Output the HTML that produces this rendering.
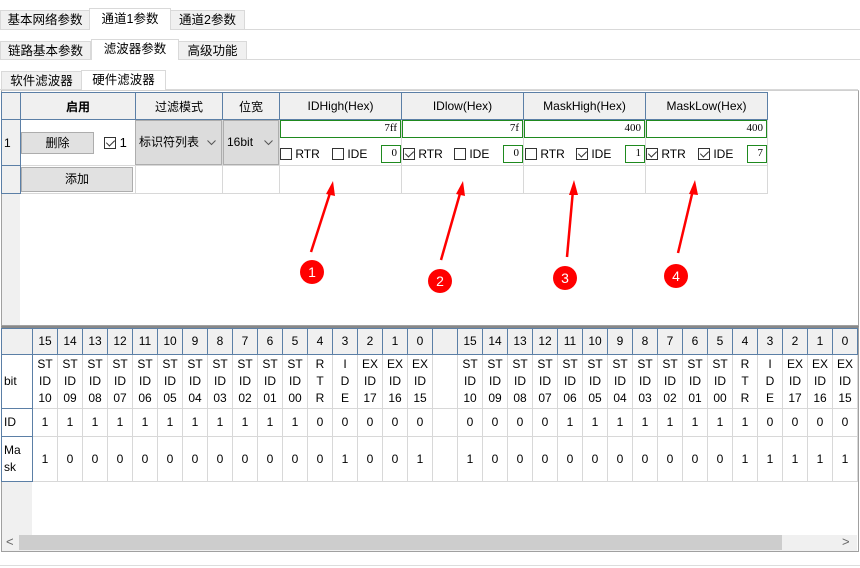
<!DOCTYPE html>
<html><head><meta charset="utf-8"><style>
*{box-sizing:border-box;margin:0;padding:0}
body{width:860px;height:568px;background:#fff;font-family:"Liberation Sans","Noto Sans CJK SC",sans-serif;font-size:12px;color:#000;position:relative;overflow:hidden}
.a{position:absolute}
.tab{position:absolute;background:#f0f0f0;border:1px solid #d9d9d9;border-bottom:none;text-align:center;font-size:12.5px;line-height:18px}
.tab.s{background:#fff}
.hl{position:absolute;left:0;right:0;height:1px;background:#d9d9d9}
table{border-collapse:collapse;table-layout:fixed;position:absolute}
td{border:1px solid #d8d8d8;text-align:center;padding:0;overflow:hidden;white-space:nowrap}
.h td{background:#f0f0f0;border-color:#5b7fa6}
.rh{background:#f0f0f0;border-color:#5b7fa6 !important}
.btn{position:absolute;background:#e1e1e1;border:1px solid #adadad;text-align:center;line-height:20px}
.cb{display:inline-block;width:12px;height:12px;border:1px solid #333;vertical-align:-2px;position:relative;background:#fff}
.cb.c::after{content:"";position:absolute;left:3px;top:0px;width:4px;height:7px;border:solid #333;border-width:0 1px 1px 0;transform:rotate(45deg)}
.gi{position:absolute;border:1px solid #1f8a1f;background:#fff;text-align:right;font-family:"Liberation Serif","Noto Serif CJK SC",serif;font-size:11px;line-height:15px;padding-right:3px}
.cell{position:absolute;font-size:12px;line-height:14px}
.g2 td{font-size:12px;line-height:17px}
.chev{position:absolute;right:5px;top:19px}
</style></head><body>
<div class="hl" style="top:29px"></div>
<div class="tab" style="left:0;top:10px;width:90px;height:19px">基本网络参数</div>
<div class="tab s" style="left:89px;top:8px;width:82px;height:22px;line-height:20px">通道1参数</div>
<div class="tab" style="left:170px;top:10px;width:75px;height:19px">通道2参数</div>
<div class="hl" style="top:59px"></div>
<div class="tab" style="left:0;top:41px;width:91px;height:18px">链路基本参数</div>
<div class="tab s" style="left:91px;top:39px;width:88px;height:21px">滤波器参数</div>
<div class="tab" style="left:178px;top:41px;width:69px;height:18px">高级功能</div>
<div class="hl" style="top:89px;left:0;right:2px"></div>
<div class="tab" style="left:1px;top:71px;width:81px;height:18px">软件滤波器</div>
<div class="tab s" style="left:81px;top:70px;width:85px;height:21px">硬件滤波器</div>

<div class="a" style="left:1px;top:90px;width:858px;height:236px;border:1px solid #a0a0a0;border-top-color:#d0d0d0"></div>
<div class="a" style="left:2px;top:193px;width:18px;height:132px;background:#f0f0f0"></div>
<table style="left:1px;top:92px">
<colgroup><col style="width:19px"><col style="width:115px"><col style="width:87px"><col style="width:57px"><col style="width:122px"><col style="width:122px"><col style="width:122px"><col style="width:122px"></colgroup>
<tr class="h" style="height:27px"><td></td><td style="font-weight:bold">启用</td><td>过滤模式</td><td>位宽</td><td>IDHigh(Hex)</td><td>IDlow(Hex)</td><td>MaskHigh(Hex)</td><td>MaskLow(Hex)</td></tr>
<tr style="height:46px"><td class="rh" style="text-align:left;padding-left:2px">1</td><td></td><td></td><td></td><td></td><td></td><td></td><td></td></tr>
<tr style="height:28px"><td class="rh"></td><td></td><td></td><td></td><td></td><td></td><td></td><td></td></tr>
</table>
<div class="btn" style="left:21px;top:132px;width:73px;height:22px">删除</div>
<div class="a" style="left:104px;top:135px;font-size:13px"><span class="cb c"></span> 1</div>
<div class="a" style="left:135px;top:120px;width:87px;height:45px;background:#dcdcdc;border:1px solid #adadad;line-height:43px;padding-left:3px">标识符列表<svg class="chev" width="9" height="6"><path d="M0.5 0.5 L4.5 4.5 L8.5 0.5" fill="none" stroke="#555"/></svg></div>
<div class="a" style="left:223px;top:120px;width:56px;height:45px;background:#dcdcdc;border:1px solid #adadad;line-height:43px;padding-left:3px">16bit<svg class="chev" width="9" height="6"><path d="M0.5 0.5 L4.5 4.5 L8.5 0.5" fill="none" stroke="#555"/></svg></div>
<div class="btn" style="left:21px;top:167px;width:112px;height:25px;line-height:23px">添加</div>

<div class="gi" style="left:280px;top:120px;width:121px;height:18px">7ff</div>
<div class="gi" style="left:402px;top:120px;width:121px;height:18px">7f</div>
<div class="gi" style="left:524px;top:120px;width:121px;height:18px">400</div>
<div class="gi" style="left:646px;top:120px;width:121px;height:18px">400</div>

<div class="cell" style="left:280px;top:147px"><span class="cb"></span> RTR</div>
<div class="cell" style="left:332px;top:147px"><span class="cb"></span> IDE</div>
<div class="gi" style="left:381px;top:145px;width:20px;height:18px">0</div>
<div class="cell" style="left:403px;top:147px"><span class="cb c"></span> RTR</div>
<div class="cell" style="left:454px;top:147px"><span class="cb"></span> IDE</div>
<div class="gi" style="left:503px;top:145px;width:20px;height:18px">0</div>
<div class="cell" style="left:525px;top:147px"><span class="cb"></span> RTR</div>
<div class="cell" style="left:576px;top:147px"><span class="cb c"></span> IDE</div>
<div class="gi" style="left:625px;top:145px;width:20px;height:18px">1</div>
<div class="cell" style="left:646px;top:147px"><span class="cb c"></span> RTR</div>
<div class="cell" style="left:698px;top:147px"><span class="cb c"></span> IDE</div>
<div class="gi" style="left:747px;top:145px;width:20px;height:18px">7</div>

<svg class="a" style="left:0;top:0" width="860" height="568">
<g stroke="#f00" stroke-width="2.5" fill="#f00">
<line x1="311" y1="252" x2="331" y2="190"/><polygon points="333,181 326,194 335,196" stroke="none"/>
<line x1="441" y1="260" x2="461" y2="190"/><polygon points="463,181 456,194 465,196" stroke="none"/>
<line x1="567" y1="257" x2="573" y2="190"/><polygon points="574,180 569,195 578,195" stroke="none"/>
<line x1="678" y1="253" x2="693" y2="190"/><polygon points="695,180 689,194 698,195" stroke="none"/>
</g>
<g fill="#f00"><circle cx="312" cy="272" r="12"/><circle cx="440" cy="281" r="12"/><circle cx="565" cy="278" r="12"/><circle cx="676" cy="276" r="12"/></g>
<g fill="#fff" font-family="Liberation Sans" font-size="14" text-anchor="middle"><text x="312" y="277">1</text><text x="440" y="286">2</text><text x="565" y="283">3</text><text x="676" y="281">4</text></g>
</svg>

<div class="a" style="left:1px;top:326px;width:858px;height:226px;border:1px solid #a0a0a0;border-top:2px solid #888"></div>
<div class="a" style="left:2px;top:481px;width:30px;height:54px;background:#f0f0f0"></div>
<div class="a" style="left:2px;top:535px;width:855px;height:16px;background:#f0f0f0"></div>
<div class="a" style="left:19px;top:535px;width:763px;height:15px;background:#cdcdcd"></div>
<div class="a" style="left:6px;top:534px;color:#666;font-size:13px">&lt;</div>
<div class="a" style="left:842px;top:534px;color:#666;font-size:13px">&gt;</div>
<div class="a" style="left:0;top:565px;width:860px;height:1px;background:#ddd"></div>
<table class="g2" style="left:1px;top:328px">
<colgroup><col style="width:31px"><col style="width:25px"><col style="width:25px"><col style="width:25px"><col style="width:25px"><col style="width:25px"><col style="width:25px"><col style="width:25px"><col style="width:25px"><col style="width:25px"><col style="width:25px"><col style="width:25px"><col style="width:25px"><col style="width:25px"><col style="width:25px"><col style="width:25px"><col style="width:25px"><col style="width:25px"><col style="width:25px"><col style="width:25px"><col style="width:25px"><col style="width:25px"><col style="width:25px"><col style="width:25px"><col style="width:25px"><col style="width:25px"><col style="width:25px"><col style="width:25px"><col style="width:25px"><col style="width:25px"><col style="width:25px"><col style="width:25px"><col style="width:25px"><col style="width:25px"></colgroup>
<tr class="h" style="height:26px"><td></td><td>15</td><td>14</td><td>13</td><td>12</td><td>11</td><td>10</td><td>9</td><td>8</td><td>7</td><td>6</td><td>5</td><td>4</td><td>3</td><td>2</td><td>1</td><td>0</td><td></td><td>15</td><td>14</td><td>13</td><td>12</td><td>11</td><td>10</td><td>9</td><td>8</td><td>7</td><td>6</td><td>5</td><td>4</td><td>3</td><td>2</td><td>1</td><td>0</td></tr>
<tr style="height:54px"><td class="rh" style="text-align:left;padding-left:2px;background:#fff">bit</td><td>ST<br>ID<br>10</td><td>ST<br>ID<br>09</td><td>ST<br>ID<br>08</td><td>ST<br>ID<br>07</td><td>ST<br>ID<br>06</td><td>ST<br>ID<br>05</td><td>ST<br>ID<br>04</td><td>ST<br>ID<br>03</td><td>ST<br>ID<br>02</td><td>ST<br>ID<br>01</td><td>ST<br>ID<br>00</td><td>R<br>T<br>R</td><td>I<br>D<br>E</td><td>EX<br>ID<br>17</td><td>EX<br>ID<br>16</td><td>EX<br>ID<br>15</td><td></td><td>ST<br>ID<br>10</td><td>ST<br>ID<br>09</td><td>ST<br>ID<br>08</td><td>ST<br>ID<br>07</td><td>ST<br>ID<br>06</td><td>ST<br>ID<br>05</td><td>ST<br>ID<br>04</td><td>ST<br>ID<br>03</td><td>ST<br>ID<br>02</td><td>ST<br>ID<br>01</td><td>ST<br>ID<br>00</td><td>R<br>T<br>R</td><td>I<br>D<br>E</td><td>EX<br>ID<br>17</td><td>EX<br>ID<br>16</td><td>EX<br>ID<br>15</td></tr>
<tr style="height:28px"><td class="rh" style="text-align:left;padding-left:2px;background:#fff">ID</td><td>1</td><td>1</td><td>1</td><td>1</td><td>1</td><td>1</td><td>1</td><td>1</td><td>1</td><td>1</td><td>1</td><td>0</td><td>0</td><td>0</td><td>0</td><td>0</td><td></td><td>0</td><td>0</td><td>0</td><td>0</td><td>1</td><td>1</td><td>1</td><td>1</td><td>1</td><td>1</td><td>1</td><td>1</td><td>0</td><td>0</td><td>0</td><td>0</td></tr>
<tr style="height:45px"><td class="rh" style="text-align:left;padding-left:2px;background:#fff">Ma<br>sk</td><td>1</td><td>0</td><td>0</td><td>0</td><td>0</td><td>0</td><td>0</td><td>0</td><td>0</td><td>0</td><td>0</td><td>0</td><td>1</td><td>0</td><td>0</td><td>1</td><td></td><td>1</td><td>0</td><td>0</td><td>0</td><td>0</td><td>0</td><td>0</td><td>0</td><td>0</td><td>0</td><td>0</td><td>1</td><td>1</td><td>1</td><td>1</td><td>1</td></tr>
</table>
</body></html>
